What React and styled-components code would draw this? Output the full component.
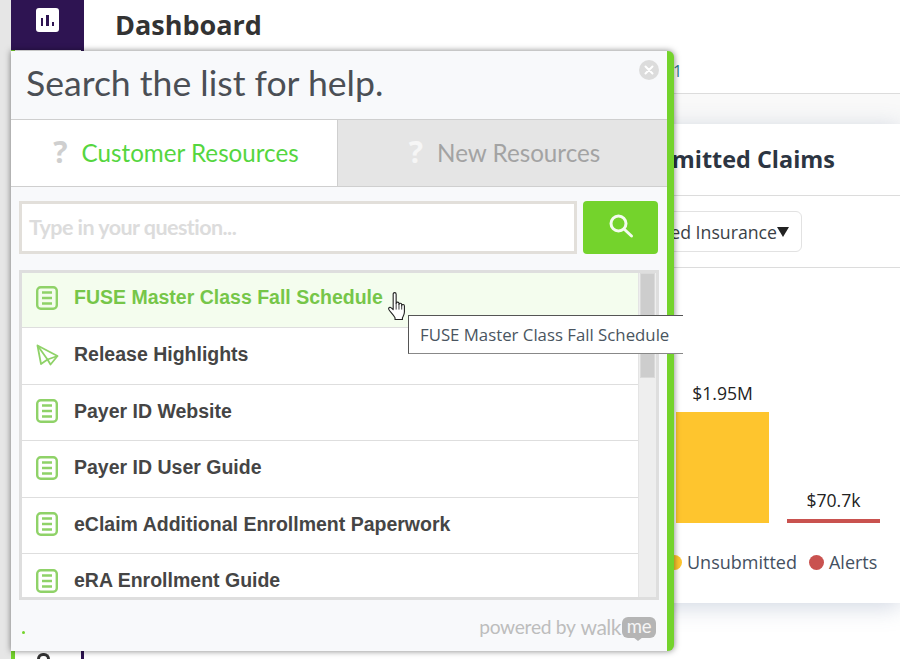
import React from 'react';
import styled, { createGlobalStyle } from 'styled-components';

const Global = createGlobalStyle`
  html, body { margin: 0; padding: 0; width: 900px; height: 659px; overflow: hidden; background: #fff; }
  * { box-sizing: border-box; }
`;

const Page = styled.div`
  position: relative;
  width: 900px;
  height: 659px;
  overflow: hidden;
  display: flex;
  background: #fff;
  font-family: "Open Sans", sans-serif;
`;
const Gutter = styled.div`
  width: 11px;
  background: #e6e6e6;
  flex: none;
`;
const Sidebar = styled.nav`
  width: 73px;
  flex: none;
  display: flex;
  flex-direction: column;
  background: #fff;
  border-right: 3px solid #2e1452;
`;
const SideActive = styled.div`
  height: 50px;
  margin-right: -3px;
  background: #2e1452;
  display: flex;
  justify-content: center;
  padding-top: 8px;
`;
const SideIconBox = styled.div`
  width: 23px;
  height: 24px;
  border-radius: 3px;
  background: #fff;
  display: flex;
  align-items: flex-end;
  justify-content: center;
  gap: 2.7px;
  padding-bottom: 6.5px;
`;
const SideBar = styled.span`
  width: 2.7px;
  height: ${p => p.$h}px;
  background: #2e1452;
`;
const SideSpacer = styled.div`
  flex: 1;
  border-left: 4px solid #74d32c;
  display: flex;
  align-items: flex-end;
  justify-content: center;
`;
const SideGlyph = styled.div`
  width: 13px;
  height: 6px;
  border: 3px solid #333;
  border-bottom: 0;
  border-radius: 7px 7px 0 0;
  margin-right: 10px;
`;
const Main = styled.main`
  flex: 1;
  display: flex;
  flex-direction: column;
  min-width: 0;
`;
const Header = styled.header`
  height: 94px;
  padding: 7px 0 0 31px;
  border-bottom: 1px solid #dcdcdc;
  position: relative;
`;
const PageTitle = styled.h1`
  margin: 0;
  font-size: 27px;
  line-height: 36px;
  font-weight: 700;
  color: #333;
`;
const Crumb = styled.div`
  margin: 18px 0 0 558px;
  font-size: 16px;
  line-height: 20px;
  color: #2a7a8c;
`;
const Band = styled.div`
  height: 30px;
  background: #f9f9f9;
  flex: none;
`;
const Card = styled.section`
  height: 479px;
  background: #fff;
  box-shadow: 0 4px 22px rgba(90, 110, 150, 0.28);
  flex: none;
`;
const CardTitle = styled.h2`
  margin: 0;
  height: 72px;
  padding: 16px 0 0 513px;
  border-bottom: 1px solid #dcdcdc;
  font-size: 23.4px;
  line-height: 38px;
  font-weight: 700;
  color: #2c3542;
  white-space: nowrap;
`;
const FilterRow = styled.div`
  height: 72px;
  padding: 15px 0 0 465px;
  border-bottom: 1px solid #dcdcdc;
`;
const Select = styled.div`
  width: 253px;
  height: 41px;
  border: 1px solid #e2e2e2;
  border-radius: 6px;
  display: flex;
  align-items: center;
  justify-content: flex-end;
  padding-right: 12px;
  font-size: 17.7px;
  color: #3a3f46;
  white-space: nowrap;
`;
const Caret = styled.span`
  width: 0;
  height: 0;
  border-left: 6px solid transparent;
  border-right: 6px solid transparent;
  border-top: 10px solid #222;
`;
const Chart = styled.div`
  height: 256px;
  position: relative;
  padding: 113px 0 0 592px;
  display: flex;
  align-items: flex-start;
  gap: 18px;
`;
const BarColumn = styled.div`
  width: 93px;
  height: 142px;
  display: flex;
  flex-direction: column;
  justify-content: flex-end;
  align-items: center;
`;
const BarValue = styled.div`
  font-size: 17.6px;
  line-height: 24px;
  margin-bottom: 7px;
  color: #222;
`;
const BarFill = styled.div`
  width: 100%;
  height: ${p => p.$h}px;
  background: ${p => p.$c};
`;
const Legend = styled.div`
  position: absolute;
  left: 583px;
  top: 282px;
  display: flex;
  gap: 12px;
  font-size: 18px;
  line-height: 24px;
  color: #44505f;
`;
const LegendItem = styled.div`
  display: flex;
  align-items: center;
  gap: 5px;
`;
const Dot = styled.span`
  width: 15px;
  height: 15px;
  border-radius: 50%;
  background: ${p => p.$c};
`;

/* WalkMe widget floats over the page */
const Widget = styled.div`
  position: absolute;
  left: 11px;
  top: 51px;
  width: 663px;
  height: 600px;
  background: #f8f9fb;
  border-right: 7px solid #74d32c;
  border-radius: 0 6px 6px 0;
  box-shadow: 0 0 6px rgba(0, 0, 0, 0.5);
  font-family: Lato, sans-serif;
  display: flex;
  flex-direction: column;
`;
const WidgetTitle = styled.div`
  height: 68px;
  padding: 8px 0 0 15px;
  font-size: 35.6px;
  line-height: 48px;
  color: #4b4f55;
  flex: none;
`;
const Close = styled.div`
  position: absolute;
  right: 8px;
  top: 9px;
  width: 20px;
  height: 20px;
  border-radius: 50%;
  background: #dcdcdc;
  display: flex;
  align-items: center;
  justify-content: center;
`;
const Tabs = styled.div`
  height: 68px;
  flex: none;
  display: flex;
  border-top: 1px solid #cfcfcf;
  border-bottom: 1px solid #cfcfcf;
`;
const Tab = styled.div`
  width: ${p => p.$w}px;
  flex: none;
  display: flex;
  align-items: center;
  justify-content: center;
  gap: 14px;
  padding: 0 0 2px 4px;
  font-size: 24.2px;
  background: ${p => (p.$active ? '#fff' : '#e5e5e5')};
  color: ${p => (p.$active ? '#55d63f' : '#a3a3a3')};
  border-left: ${p => (p.$active ? '0' : '1px solid #cfcfcf')};
`;
const TabMark = styled.span`
  font-family: "Open Sans", sans-serif;
  font-weight: 700;
  font-size: 30px;
  line-height: 1;
  color: ${p => (p.$active ? '#cfcfcf' : '#f6f6f6')};
`;
const SearchRow = styled.div`
  display: flex;
  gap: 6px;
  padding: 14px 8px 0 8px;
  flex: none;
`;
const SearchInput = styled.div`
  width: 558px;
  height: 53px;
  background: #fff;
  border: 3px solid #e2dfda;
  display: flex;
  align-items: center;
  padding: 0 0 2px 7px;
  font-size: 21.5px;
  font-weight: 700;
  letter-spacing: -0.55px;
  color: #dcdcdc;
`;
const SearchButton = styled.div`
  width: 75px;
  height: 53px;
  background: #74d32c;
  border-radius: 4px;
  display: flex;
  align-items: center;
  justify-content: center;
  padding-bottom: 4px;
`;
const ListFrame = styled.div`
  margin: 16px 8px 0 8px;
  width: 640px;
  height: 330px;
  border: 3px solid #dedede;
  background: #fff;
  display: flex;
  overflow: hidden;
  flex: none;
`;
const List = styled.ul`
  margin: 0;
  padding: 0;
  list-style: none;
  flex: 1;
  min-width: 0;
`;
const Row = styled.li`
  height: ${p => (p.$first ? 55 : 56.5)}px;
  display: flex;
  align-items: center;
  gap: 15px;
  padding: 0 0 ${p => (p.$first ? 5 : 2)}px 13px;
  border-bottom: 1px solid #dedede;
  background: ${p => (p.$hover ? '#f4fdee' : '#fff')};
  color: ${p => (p.$hover ? '#76c649' : '#454545')};
  font-family: "Liberation Sans", Arial, sans-serif;
  font-weight: 700;
  font-size: 19.5px;
  white-space: nowrap;
`;
const IconWrap = styled.span`
  width: 24px;
  height: 24px;
  flex: none;
  display: flex;
`;
const Scrollbar = styled.div`
  width: 18px;
  flex: none;
  background: #eeeeee;
  border-left: 1px solid #e4e4e4;
  padding: 0 1px;
`;
const Thumb = styled.div`
  height: 105px;
  background: #cdcdcd;
  border: 1px solid #dadada;
`;
const Footer = styled.div`
  flex: 1;
  position: relative;
  display: flex;
  align-items: flex-start;
  justify-content: flex-end;
  padding: 16px 11px 0 0;
`;
const GreenDot = styled.span`
  position: absolute;
  left: 11px;
  top: 31px;
  width: 3px;
  height: 3px;
  background: #74d32c;
  border-radius: 50%;
`;
const Powered = styled.div`
  display: flex;
  align-items: center;
  font-family: Lato, sans-serif;
  font-size: 19.2px;
  line-height: 22px;
  color: #bdbdbd;
  letter-spacing: -0.3px;
`;
const Walk = styled.span`
  margin-left: 5px;
  font-size: 21px;
  letter-spacing: -0.5px;
`;
const MeBadge = styled.span`
  position: relative;
  margin-left: 1px;
  width: 34px;
  height: 21px;
  border-radius: 6px;
  background: #b5b5b5;
  color: #f5f5f5;
  font-size: 18.5px;
  line-height: 19px;
  text-align: center;
  &::after {
    content: '';
    position: absolute;
    left: 11px;
    bottom: -3px;
    border-left: 5px solid transparent;
    border-right: 5px solid transparent;
    border-top: 4px solid #b5b5b5;
  }
`;
const Tooltip = styled.div`
  position: absolute;
  left: 408px;
  top: 315px;
  width: 275px;
  height: 39px;
  background: #fff;
  border: 1px solid #555;
  border-right: 0;
  border-bottom-color: #888;
  display: flex;
  align-items: center;
  padding-left: 11px;
  font-family: "Open Sans", sans-serif;
  font-size: 16.8px;
  color: #4a5560;
  white-space: nowrap;
`;
const Cursor = styled.svg`
  position: absolute;
  left: 387px;
  top: 291px;
`;

const GREEN = '#8fd268';
const DocIcon = () => (
  <IconWrap>
    <svg width="24" height="24" viewBox="0 0 24 24" fill="none" stroke={GREEN} strokeWidth="2.4">
      <rect x="2.2" y="1.2" width="19.6" height="21.6" rx="3.5" />
      <path d="M7 6.5h10M7 12h10M7 17.5h10" />
    </svg>
  </IconWrap>
);
const PlaneIcon = () => (
  <IconWrap>
    <svg width="24" height="24" viewBox="0 0 24 24" fill="none" stroke={GREEN} strokeWidth="1.8" strokeLinejoin="round">
      <path d="M2.5 2.5 22.5 13 12.5 16.5 6 21Z" />
      <path d="M2.5 2.5 12.5 16.5 15.5 21.5 22.5 13" />
    </svg>
  </IconWrap>
);

const items = ['Payer ID Website', 'Payer ID User Guide', 'eClaim Additional Enrollment Paperwork', 'eRA Enrollment Guide'];

export default function App() {
  return (
    <Page>
      <Global />
      <Gutter />
      <Sidebar>
        <SideActive>
          <SideIconBox>
            <SideBar $h={8} />
            <SideBar $h={11} />
            <SideBar $h={4} />
          </SideIconBox>
        </SideActive>
        <SideSpacer><SideGlyph /></SideSpacer>
      </Sidebar>
      <Main>
        <Header>
          <PageTitle>Dashboard</PageTitle>
          <Crumb>1</Crumb>
        </Header>
        <Band />
        <Card>
          <CardTitle>Unsubmitted Claims</CardTitle>
          <FilterRow>
            <Select>Selected Insurance<Caret /></Select>
          </FilterRow>
          <Chart>
            <BarColumn>
              <BarValue>$1.95M</BarValue>
              <BarFill $h={112} $c="#fec52e" />
            </BarColumn>
            <BarColumn>
              <BarValue>$70.7k</BarValue>
              <BarFill $h={4} $c="#c9524f" />
            </BarColumn>
            <Legend>
              <LegendItem><Dot $c="#fec52e" />Unsubmitted</LegendItem>
              <LegendItem><Dot $c="#c9524f" />Alerts</LegendItem>
            </Legend>
          </Chart>
        </Card>
      </Main>

      <Widget>
        <WidgetTitle>Search the list for help.</WidgetTitle>
        <Close>
          <svg width="10" height="10" viewBox="0 0 10 10" stroke="#fff" strokeWidth="2" strokeLinecap="round">
            <path d="M1.5 1.5l7 7M8.5 1.5l-7 7" />
          </svg>
        </Close>
        <Tabs>
          <Tab $active $w={326}><TabMark $active>?</TabMark>Customer Resources</Tab>
          <Tab $w={330}><TabMark>?</TabMark>New Resources</Tab>
        </Tabs>
        <SearchRow>
          <SearchInput>Type in your question...</SearchInput>
          <SearchButton>
            <svg width="26" height="26" viewBox="0 0 26 26" fill="none" stroke="#f4fbef" strokeWidth="3" strokeLinecap="round">
              <circle cx="10.5" cy="10.5" r="7.5" />
              <path d="M16.5 16.5l7 6.5" />
            </svg>
          </SearchButton>
        </SearchRow>
        <ListFrame>
          <List>
            <Row $hover $first><DocIcon />FUSE Master Class Fall Schedule</Row>
            <Row><PlaneIcon />Release Highlights</Row>
            {items.map(t => <Row key={t}><DocIcon />{t}</Row>)}
          </List>
          <Scrollbar><Thumb /></Scrollbar>
        </ListFrame>
        <Footer>
          <GreenDot />
          <Powered>powered by<Walk>walk</Walk><MeBadge>me</MeBadge></Powered>
        </Footer>
      </Widget>

      <Tooltip>FUSE Master Class Fall Schedule</Tooltip>
      <Cursor width="21" height="31" viewBox="0 0 17 25">
        <path d="M5 2.5c0-1.6 2.4-1.6 2.4 0V10c0-1.4 2.3-1.4 2.3 0v.8c0-1.3 2.2-1.3 2.2.1v.9c0-1.2 2.2-1.2 2.2.2v5c0 2-.8 3-1.6 4.6v1.4H6.5v-1.4C5 19 2.6 17 1.5 15c-.7-1.4.8-2.6 2-1.4L5 15Z" fill="#fff" stroke="#222" strokeWidth="0.9" strokeLinejoin="round" />
        <path d="M7.4 10v5M9.7 10.8V15M11.9 11.8V15" stroke="#222" strokeWidth="0.7" />
      </Cursor>
    </Page>
  );
}
